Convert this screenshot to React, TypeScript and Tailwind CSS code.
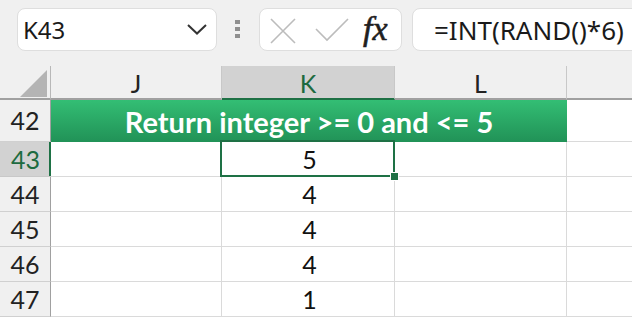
import React from "react";

const cellFont = { fontFamily: "Lato, 'Liberation Sans', sans-serif" };
const uiFont = { fontFamily: "'Noto Sans', 'Open Sans', sans-serif" };

function RowHeader({ n, active }: { n: number; active?: boolean }) {
  return (
    <div
      className={
        active
          ? "relative flex items-center justify-center bg-[#d2d2d2] text-[#1d6b40] border-b border-[#c8c8c8] text-[25px] leading-none"
          : "flex items-center justify-center bg-[#f0f0f0] text-[#222] border-b border-[#d0d0d0] border-r border-r-[#a0a0a0] text-[25px] leading-none"
      }
    >
      {n}
      {active && <div className="absolute right-0 top-0 bottom-0 w-[2px] bg-[#1e7145]" />}
    </div>
  );
}

function Cell({ children, last }: { children?: React.ReactNode; last?: boolean }) {
  return (
    <div
      className={
        "flex items-center justify-center border-b border-[#dadada] text-[25px] leading-none text-[#111] " +
        (last ? "" : "border-r border-r-[#dadada]")
      }
    >
      {children}
    </div>
  );
}

export default function App() {
  const rows = [
    { n: 44, v: "4" },
    { n: 45, v: "4" },
    { n: 46, v: "4" },
    { n: 47, v: "1" },
  ];
  return (
    <div className="w-[632px] h-[318px] overflow-hidden bg-white">
      {/* Formula bar */}
      <div className="h-[66px] bg-[#f0f0f0] flex items-start pt-[8px] pl-[17px]" style={uiFont}>
        <div className="w-[200px] h-[43px] rounded-[8px] bg-white border border-[#dedede] flex items-center justify-between pl-[5px] pr-[9px] shrink-0">
          <span className="text-[24px] text-[#1a1a1a] leading-none">K43</span>
          <svg width="20" height="11" viewBox="0 0 20 11">
            <path d="M1 1 L10 9.5 L19 1" fill="none" stroke="#333" strokeWidth="2" />
          </svg>
        </div>
        <div className="ml-[18px] mt-[12px] w-[5px] flex flex-col gap-[3px] shrink-0">
          <div className="h-[4px] bg-[#8f8f8f]" />
          <div className="h-[4px] bg-[#8f8f8f]" />
          <div className="h-[4px] bg-[#8f8f8f]" />
        </div>
        <div className="ml-[19px] w-[143px] h-[43px] rounded-[8px] bg-white border border-[#dedede] flex items-center shrink-0 relative">
          <svg className="absolute left-[10px] top-[9px]" width="27" height="26" viewBox="0 0 27 26">
            <path d="M1 1 L25 25 M25 1 L1 25" fill="none" stroke="#bcbcbc" strokeWidth="1.6" />
          </svg>
          <svg className="absolute left-[55px] top-[9px]" width="34" height="24" viewBox="0 0 34 24">
            <path d="M1 11 L12 22 L33 1" fill="none" stroke="#bcbcbc" strokeWidth="1.6" />
          </svg>
          <span
            className="absolute left-[103px] top-[3px] text-[34px] italic leading-none text-[#1f1f1f]"
            style={{ fontFamily: "'Liberation Serif', 'DejaVu Serif', serif", WebkitTextStroke: "0.6px #1f1f1f" }}
          >
            fx
          </span>
        </div>
        <div className="ml-[10px] w-[260px] h-[43px] rounded-[8px] bg-white border border-[#dedede] flex items-center pl-[21px] shrink-0">
          <span className="text-[26px] text-[#1a1a1a] leading-none whitespace-nowrap">=INT(RAND()*6)</span>
        </div>
      </div>

      {/* Grid */}
      <div
        className="grid grid-cols-[51px_171px_173px_172px_66px] grid-rows-[34px_42px_35px_35px_35px_35px_35px_35px] relative"
        style={cellFont}
      >
        {/* Header row */}
        <div className="relative bg-[#f0f0f0] border-b-2 border-b-[#a0a0a0] border-r border-r-[#b8b8b8]">
          <svg className="absolute left-[20px] top-[4px]" width="28" height="28" viewBox="0 0 28 28">
            <polygon points="0,27 27,27 27,0" fill="#b4b4b4" />
          </svg>
        </div>
        <div className="flex items-center justify-center bg-[#f0f0f0] border-b-2 border-b-[#a0a0a0] border-r border-r-[#c8c8c8] text-[25px] text-[#222] leading-none pt-[2px]">
          J
        </div>
        <div className="flex items-center justify-center bg-[#d2d2d2] border-b-2 border-b-[#1e7145] border-r border-r-[#c8c8c8] text-[25px] text-[#1d6b40] leading-none pt-[2px]">
          K
        </div>
        <div className="flex items-center justify-center bg-[#f0f0f0] border-b-2 border-b-[#a0a0a0] border-r border-r-[#c8c8c8] text-[25px] text-[#222] leading-none pt-[2px]">
          L
        </div>
        <div className="bg-[#f0f0f0] border-b-2 border-b-[#a0a0a0]" />

        {/* Row 42 */}
        <RowHeader n={42} />
        <div className="col-span-3 flex items-center justify-center bg-gradient-to-b from-[#33be74] to-[#219257] text-white font-bold text-[29px] leading-none pt-[1px]">
          Return integer &gt;= 0 and &lt;= 5
        </div>
        <div className="border-b border-[#dadada]" />

        {/* Row 43 */}
        <RowHeader n={43} active />
        <Cell />
        <div className="relative flex items-center justify-center border-b border-[#dadada] border-r border-r-[#dadada] text-[25px] leading-none text-[#111]">
          <span className="pl-[3px]">5</span>
          <div className="absolute -left-[2px] -top-[2px] -right-[1px] -bottom-[1px] border-2 border-[#1e7145] pointer-events-none" />
          <div className="absolute -right-[5px] -bottom-[5px] w-[9px] h-[9px] bg-[#1e7145] border border-white z-10" />
        </div>
        <Cell />
        <Cell last />

        {rows.map((r) => (
          <React.Fragment key={r.n}>
            <RowHeader n={r.n} />
            <Cell />
            <Cell>
              <span className="pl-[3px]">{r.v}</span>
            </Cell>
            <Cell />
            <Cell last />
          </React.Fragment>
        ))}
      </div>
    </div>
  );
}
